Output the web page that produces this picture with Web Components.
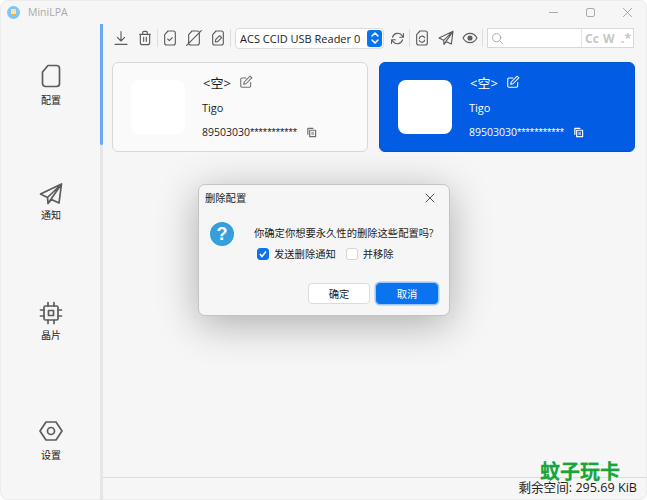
<!DOCTYPE html>
<html lang="zh">
<head>
<meta charset="utf-8">
<title>MiniLPA</title>
<style>
  html, body { margin: 0; padding: 0; background: #fff; }
  body { font-family: "Open Sans", "Noto Sans CJK SC", sans-serif; font-size: 11px; color: #1c1c1c; }
</style>
</head>
<body>
<mini-window>
  <title-bar slot="title"></title-bar>
  <side-nav slot="nav">
    <nav-item label="配置" icon="sim" gap="5"></nav-item>
    <nav-item label="通知" icon="plane" gap="2"></nav-item>
    <nav-item label="晶片" icon="chip" gap="3"></nav-item>
    <nav-item label="设置" icon="hex" gap="5"></nav-item>
  </side-nav>
  <tool-bar slot="tools"></tool-bar>
  <card-list slot="main">
    <profile-card></profile-card>
    <profile-card selected></profile-card>
  </card-list>
  <status-bar slot="status">剩余空间: 295.69 KiB</status-bar>
</mini-window>
<confirm-dialog></confirm-dialog>
<water-mark>蚊子玩卡</water-mark>

<script>
const ICONS = {
  sim: '<path d="M9 1.500h8.500a3 3 0 0 1 3 3v15a3 3 0 0 1-3 3h-11a3 3 0 0 1-3-3V8z"/>',
  plane: '<path d="M22.500 2 1.500 12l7 3.500.5 6 3.500-4 7.500 3.500zM22.500 2 8.500 15.500M22.500 2 9 21.500"/>',
  chip: '<rect x="5" y="5" width="14" height="14" rx="1.500"/><rect x="9.500" y="9.500" width="5" height="5"/><path d="M9 1.500V5M15 1.500V5M9 19v3.500M15 19v3.500M1.500 9H5M1.500 15H5M19 9h3.500M19 15h3.500"/>',
  hex: '<path d="M7 3h10l6 9-6 9H7l-6-9z"/><circle cx="12" cy="12" r="3.500"/>',
  download: '<path d="M12 2.500v14M6.500 11l5.500 5.500 5.500-5.500M3 21.500h18"/>',
  trash: '<path d="M4 6.500h16M8.500 6V4a2 2 0 0 1 2-2h3a2 2 0 0 1 2 2v2M5 6.500V19a3 3 0 0 0 3 3h8a3 3 0 0 0 3-3V6.500M10 11v6M14 11v6"/>',
  simcheck: '<path d="M9 1.500h8a3 3 0 0 1 3 3v15a3 3 0 0 1-3 3H7a3 3 0 0 1-3-3V7z"/><path d="m8.500 13.500 2.500 2.500 4.500-4.500"/>',
  simoff: '<path d="M9 1.500h8a3 3 0 0 1 3 3v15a3 3 0 0 1-3 3H7a3 3 0 0 1-3-3V7zM23 1 1 23"/>',
  simedit: '<path d="M9 1.500h8a3 3 0 0 1 3 3v15a3 3 0 0 1-3 3H7a3 3 0 0 1-3-3V7z"/><path d="m8 18 .5-3.500 6-6 3 3-6 6z"/>',
  refresh: '<path d="M4 10a8.500 8.500 0 0 1 15-3l2 2.500M20 14a8.500 8.500 0 0 1-15 3l-2-2.500M21.500 4v6h-6M2.500 20v-6h6"/>',
  simsync: '<path d="M9 1.500h8a3 3 0 0 1 3 3v15a3 3 0 0 1-3 3H7a3 3 0 0 1-3-3V7z"/><path d="M8 13a4 4 0 0 1 7-2.500l1 1M16 15a4 4 0 0 1-7 2l-1-1"/>',
  eye: '<path d="M1.500 12C4 7.500 7.500 5 12 5s8 2.500 10.500 7c-2.500 4.500-6 7-10.500 7s-8-2.500-10.500-7z"/><circle cx="12" cy="12" r="3" fill="currentColor"/>',
  search: '<circle cx="10.500" cy="10.500" r="7.500"/><path d="m16 16 6 6"/>',
  edit: '<path d="M20 13v6a2 2 0 0 1-2 2H5a2 2 0 0 1-2-2V7a2 2 0 0 1 2-2h7"/><path d="m9 12-1 4 4-1L22 5l-3-3z"/>',
  copy: '<path d="M15 3H4v13" stroke-width="2.500"/><rect x="8" y="7" width="13" height="14" stroke-width="2.500"/><rect x="11.500" y="10.500" width="6" height="7" fill="currentColor" stroke="none" opacity=".55"/>',
  close: '<path d="m4 4 16 16M20 4 4 20"/>'
};

function icon(name, size, stroke) {
  return `<svg width="${size}" height="${size}" viewBox="0 0 24 24" fill="none" stroke="currentColor" stroke-width="${stroke || 2}" stroke-linecap="round" stroke-linejoin="round">${ICONS[name]}</svg>`;
}

class MiniWindow extends HTMLElement {
  constructor() {
    super();
    this.shadowDOM = this.attachShadow({mode: 'open'});
    this.shadowDOM.innerHTML = `
      <style>
        :host { display: grid; width: 647px; height: 500px; grid-template-columns: 100px 3px 1fr; grid-template-rows: 24px 28px 1fr 23px; overflow: hidden; background: #f6f6f6; border-radius: 8px; box-shadow: inset 0 0 0 1px #ececec; }
        .title { grid-column: 1 / 4; }
        .nav { grid-column: 1; grid-row: 2 / 5; }
        .rail { grid-column: 2; grid-row: 2 / 5; background: #e6e6e6; }
        .rail i { display: block; height: 121px; background: #6aa9f5; border-radius: 0 0 2px 2px; }
        .tools { grid-column: 3; grid-row: 2; }
        .main { grid-column: 3; grid-row: 3; }
        .status { grid-column: 3; grid-row: 4; }
      </style>
      <div class="title"><slot name="title"></slot></div>
      <div class="nav"><slot name="nav"></slot></div>
      <div class="rail"><i></i></div>
      <div class="tools"><slot name="tools"></slot></div>
      <div class="main"><slot name="main"></slot></div>
      <div class="status"><slot name="status"></slot></div>`;
  }
}
customElements.define('mini-window', MiniWindow);

class TitleBar extends HTMLElement {
  constructor() {
    super();
    this.attachShadow({mode: 'open'}).innerHTML = `
      <style>
        :host { display: flex; align-items: center; height: 24px; color: #a9a9a9; font-size: 10.500px; }
        .logo { width: 13px; height: 13px; margin-left: 7px; border-radius: 50%; background: #7cc7f7; display: flex; align-items: center; justify-content: center; }
        .logo i { width: 5px; height: 6px; border-radius: 1px; background: #fbe3a8; border-bottom: 1px solid #f3ab3c; box-sizing: border-box; }
        .name { margin-left: 8px; flex: 1; }
        .btns { display: flex; align-items: center; gap: 28px; margin-right: 15px; }
        .btns svg { display: block; }
      </style>
      <span class="logo"><i></i></span>
      <span class="name">MiniLPA</span>
      <span class="btns">
        <svg width="9" height="9" viewBox="0 0 9 9"><path d="M0 4.500h9" stroke="#aaa"/></svg>
        <svg width="9" height="9" viewBox="0 0 9 9" fill="none"><rect x=".5" y=".5" width="8" height="8" rx="1.500" stroke="#aaa"/></svg>
        <svg width="9" height="9" viewBox="0 0 9 9"><path d="m0 0 9 9M9 0 0 9" stroke="#aaa"/></svg>
      </span>`;
  }
}
customElements.define('title-bar', TitleBar);

class SideNav extends HTMLElement {
  constructor() {
    super();
    this.attachShadow({mode: 'open'}).innerHTML = `
      <style>
        :host { display: grid; grid-template-rows: repeat(4, 118.400px); padding: 40px 0 0 2px; box-sizing: border-box; height: 100%; }
      </style>
      <slot></slot>`;
  }
}
customElements.define('side-nav', SideNav);

class NavItem extends HTMLElement {
  connectedCallback() {
    this.attachShadow({mode: 'open'}).innerHTML = `
      <style>
        :host { display: flex; flex-direction: column; align-items: center; color: #5c5c5c; }
        svg { display: block; }
        span { color: #1c1c1c; font-size: 10px; line-height: 14px; margin-top: ${this.getAttribute('gap')}px; }
      </style>
      ${icon(this.getAttribute('icon'), 24, 1.7)}
      <span>${this.getAttribute('label')}</span>`;
  }
}
customElements.define('nav-item', NavItem);

class ToolBar extends HTMLElement {
  constructor() {
    super();
    const b = (n, s) => `<span class="b">${icon(n, s || 16, 1.7)}</span>`;
    this.attachShadow({mode: 'open'}).innerHTML = `
      <style>
        :host { display: flex; align-items: center; height: 28px; color: #5c5c5c; padding-left: 6px; }
        .b { width: 24px; display: flex; justify-content: center; flex: none; }
        svg { display: block; }
        .sep { width: 1px; height: 18px; background: #dedede; flex: none; }
        .combo { width: 143px; height: 19px; margin: 0 1px 0 4px; background: #fff; border: 1px solid #dcdcdc; border-radius: 4px; display: flex; align-items: center; color: #1c1c1c; font-size: 11px; padding-left: 4px; flex: none; position: relative; white-space: nowrap; }
        .combo u { position: absolute; right: 1px; top: 1px; width: 15px; height: 17px; border-radius: 3px; background: #0a74f0; color: #fff; display: flex; align-items: center; justify-content: center; text-decoration: none; }
        .search { margin-left: 4px; width: 145px; height: 18px; background: #fff; border: 1px solid #d8d8d8; display: flex; align-items: center; color: #9a9a9a; flex: none; }
        .search .field { width: 90px; padding-left: 3px; display: flex; border-right: 1px solid #e4e4e4; height: 100%; align-items: center; flex: none; }
        .search b { font: 700 12px "Open Sans", sans-serif; color: #c6c6c6; flex: none; }
        .cc { margin-left: 3px; width: 18px; }
        .w { width: 18px; }
      </style>
      ${b('download')}${b('trash')}
      <span class="sep"></span>
      ${b('simcheck')}${b('simoff')}${b('simedit')}
      <span class="sep"></span>
      <span class="combo">ACS CCID USB Reader 0
        <u><svg width="10" height="14" viewBox="0 0 10 14" fill="none" stroke="#fff" stroke-width="1.500" stroke-linecap="round" stroke-linejoin="round"><path d="m2 5 3-3 3 3M2 9l3 3 3-3"/></svg></u>
      </span>
      ${b('refresh', 15)}
      <span class="sep"></span>
      ${b('simsync')}${b('plane')}${b('eye')}
      <span class="sep"></span>
      <span class="search">
        <span class="field">${icon('search', 13, 1.5)}</span>
        <b class="cc">Cc</b><b class="w">W</b><b>.*</b>
      </span>`;
  }
}
customElements.define('tool-bar', ToolBar);

class CardList extends HTMLElement {
  constructor() {
    super();
    this.attachShadow({mode: 'open'}).innerHTML = `
      <style>
        :host { display: grid; grid-template-columns: 256px 256px; gap: 11px; padding: 10px 0 0 9px; align-content: start; }
      </style>
      <slot></slot>`;
  }
}
customElements.define('card-list', CardList);

class ProfileCard extends HTMLElement {
  connectedCallback() {
    this.attachShadow({mode: 'open'}).innerHTML = `
      <style>
        :host { display: flex; height: 90px; box-sizing: border-box; border: 1px solid #d8d8d8; border-radius: 6px; background: #fafafa; color: #1c1c1c; font-size: 11px; }
        :host([selected]) { background: #025de4; border-color: #0254cc; color: #fff; }
        .pic { width: 54px; height: 54px; margin: 17px 17px 0 18px; border-radius: 8px; background: #fff; flex: none; }
        .info { display: flex; flex-direction: column; padding-top: 10px; }
        .row { display: flex; align-items: center; height: 18px; white-space: nowrap; }
        .name { font-size: 13px; margin-left: 1px; }
        .name + svg { margin-left: 8px; }
        .tigo { margin: 7px 0; }
        .iccid { font-size: 10.500px; }
        .iccid i { font: normal 11px "Liberation Sans", sans-serif; }
        .iccid svg { margin-left: 9px; }
        svg { display: block; color: #6d6d6d; }
        :host([selected]) svg { color: #fff; }
      </style>
      <div class="pic"></div>
      <div class="info">
        <div class="row"><span class="name">&lt;空&gt;</span>${icon('edit', 14, 1.8)}</div>
        <div class="row tigo">Tigo</div>
        <div class="row iccid">89503030<i>***********</i>${icon('copy', 11, 2)}</div>
      </div>`;
  }
}
customElements.define('profile-card', ProfileCard);

class StatusBar extends HTMLElement {
  constructor() {
    super();
    this.attachShadow({mode: 'open'}).innerHTML = `
      <style>
        :host { display: flex; align-items: center; justify-content: flex-end; height: 23px; box-sizing: border-box; border-top: 1px solid #dcdcdc; padding: 0 10px 3px 0; font-size: 12.600px; line-height: 14px; color: #1c1c1c; }
      </style>
      <slot></slot>`;
  }
}
customElements.define('status-bar', StatusBar);

class ConfirmDialog extends HTMLElement {
  constructor() {
    super();
    this.attachShadow({mode: 'open'}).innerHTML = `
      <style>
        :host { position: absolute; left: 198px; top: 184px; width: 252px; height: 132px; box-sizing: border-box; display: flex; flex-direction: column; background: #f6f6f6; border: 1px solid #c4c4c4; border-radius: 7px; box-shadow: 0 8px 40px rgba(0,0,0,.3); font-size: 10.300px; color: #1c1c1c; }
        .head { display: flex; align-items: center; justify-content: space-between; height: 25px; padding: 0 13px 0 6px; }
        .head svg { display: block; color: #333; }
        .body { display: flex; padding: 12px 0 0 11px; flex: 1; }
        .q { width: 24px; height: 24px; border-radius: 50%; background: #359edb; color: #fff; font: 700 18px/24px "Liberation Sans", sans-serif; text-align: center; flex: none; }
        .txt { margin-left: 20px; }
        .msg { line-height: 14px; padding-top: 4px; white-space: nowrap; }
        .opts { display: flex; align-items: center; margin-top: 7px; margin-left: 3px; line-height: 14px; }
        .cb { width: 10px; height: 10px; border: 1px solid #d5d5d5; border-radius: 3px; background: #fff; margin-right: 5px; display: inline-flex; flex: none; }
        .cb.on { background: #0a74f0; border-color: #0a74f0; }
        .opts .cb:not(:first-child) { margin-left: 10px; }
        .foot { display: flex; justify-content: flex-end; gap: 6px; padding: 0 11px 11px 0; }
        .btn { width: 60px; height: 19px; display: flex; align-items: center; justify-content: center; background: #fff; border: 1px solid #dcdcdc; border-radius: 4px; }
        .btn.primary { background: #0a74f0; border-color: #0a74f0; color: #fff; box-shadow: 0 0 0 1.500px #9cc6f8; }
      </style>
      <div class="head"><span>删除配置</span>${icon('close', 12, 1.7)}</div>
      <div class="body">
        <div class="q">?</div>
        <div class="txt">
          <div class="msg">你确定你想要永久性的删除这些配置吗?</div>
          <div class="opts">
            <span class="cb on"><svg width="10" height="10" viewBox="0 0 10 10" fill="none" stroke="#fff" stroke-width="1.600"><path d="m2 5 2 2.500 4-5"/></svg></span>发送删除通知
            <span class="cb"></span>并移除
          </div>
        </div>
      </div>
      <div class="foot">
        <span class="btn">确定</span>
        <span class="btn primary">取消</span>
      </div>`;
  }
}
customElements.define('confirm-dialog', ConfirmDialog);

class WaterMark extends HTMLElement {
  constructor() {
    super();
    this.attachShadow({mode: 'open'}).innerHTML = `
      <style>
        :host { position: absolute; left: 540px; top: 461px; font: 700 20px/20px "Noto Sans CJK SC", sans-serif; color: #17a53a; -webkit-text-stroke: .3px #17a53a; text-shadow: 0 0 2px #fff, 0 0 2px #fff, 0 0 3px #fff, 0 0 3px #fff; }
      </style>
      <slot></slot>`;
  }
}
customElements.define('water-mark', WaterMark);
</script>
</body>
</html>
